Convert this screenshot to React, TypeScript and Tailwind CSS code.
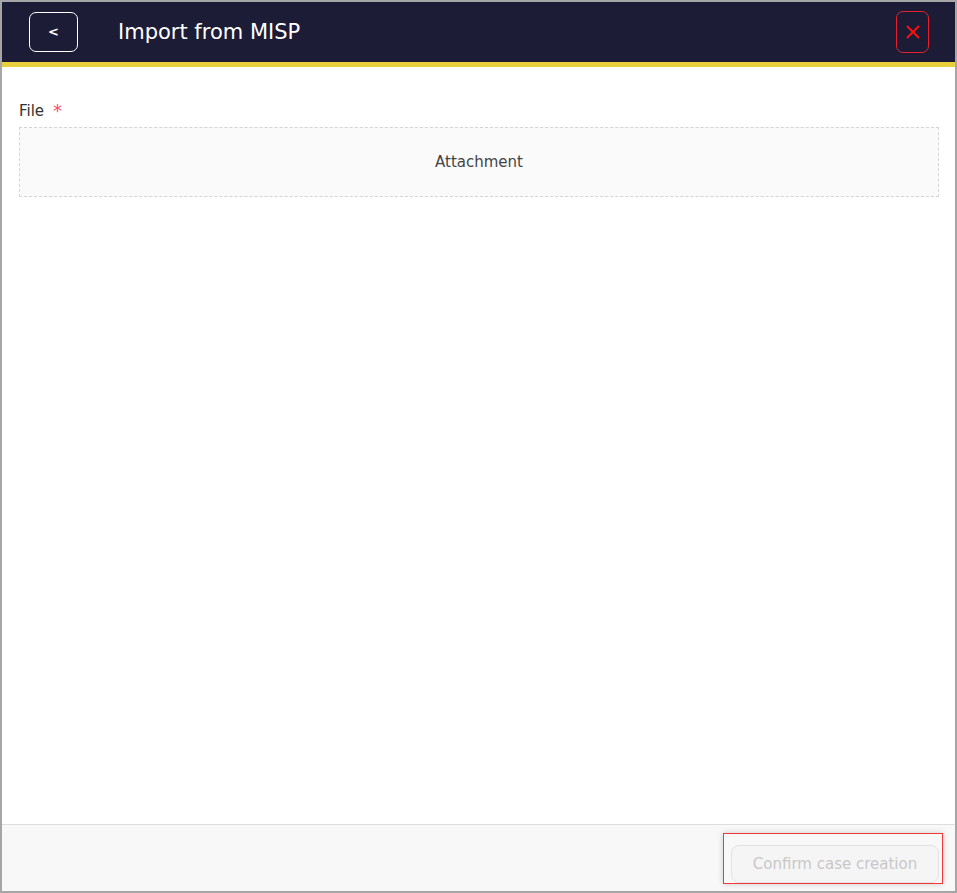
import React from 'react';
import { X } from 'lucide-react';

const font = { fontFamily: '"DejaVu Sans", "Open Sans", sans-serif' };

const App: React.FC = () => {
  return (
    <div className="w-[957px] h-[893px] border-2 border-[#a6a6a6] bg-white flex flex-col overflow-hidden" style={font}>
      <header className="h-[65px] shrink-0 bg-[#1c1c36] border-b-[5px] border-[#e8d03c] flex items-center pl-[27px] pr-[26px]">
        <button className="w-[49px] h-[40px] rounded-[7px] border border-white flex items-center justify-center text-white text-[13px] font-bold">
          &lt;
        </button>
        <h1 className="ml-[40px] text-white text-[21px] leading-none">Import from MISP</h1>
        <button className="ml-auto w-[33px] h-[42px] rounded-[7px] border border-[#e8202c] flex items-center justify-center text-[#ff1010]">
          <X size={22} strokeWidth={2} />
        </button>
      </header>

      <main className="flex-1 px-[17px] pt-[34px]">
        <div className="h-[20px] flex items-center gap-[9px] text-[15px] leading-none text-[#333333]">
          <span>File</span>
          <span className="text-[#ff4d6a] text-[18px]">*</span>
        </div>
        <div className="mt-[6px] h-[70px] w-[920px] border border-dashed border-[#d4d4d4] bg-[#fafafa] flex items-center justify-center text-[15px] text-[#444444]">
          Attachment
        </div>
      </main>

      <footer className="h-[67px] shrink-0 border-t border-[#dedede] bg-[#f8f8f8] flex justify-end pr-[12px] pt-[8px]">
        <div className="w-[220px] h-[51px] border border-[#f03a3a] shadow-[0_0_6px_rgba(0,0,0,0.18)] flex justify-end items-end pr-[3px]">
          <button
            disabled
            className="w-[208px] h-[38px] rounded-[8px] border border-[#e2e2e2] bg-[#f5f5f5] text-[15px] text-[#c8c8c8]"
          >
            Confirm case creation
          </button>
        </div>
      </footer>
    </div>
  );
};

export default App;
